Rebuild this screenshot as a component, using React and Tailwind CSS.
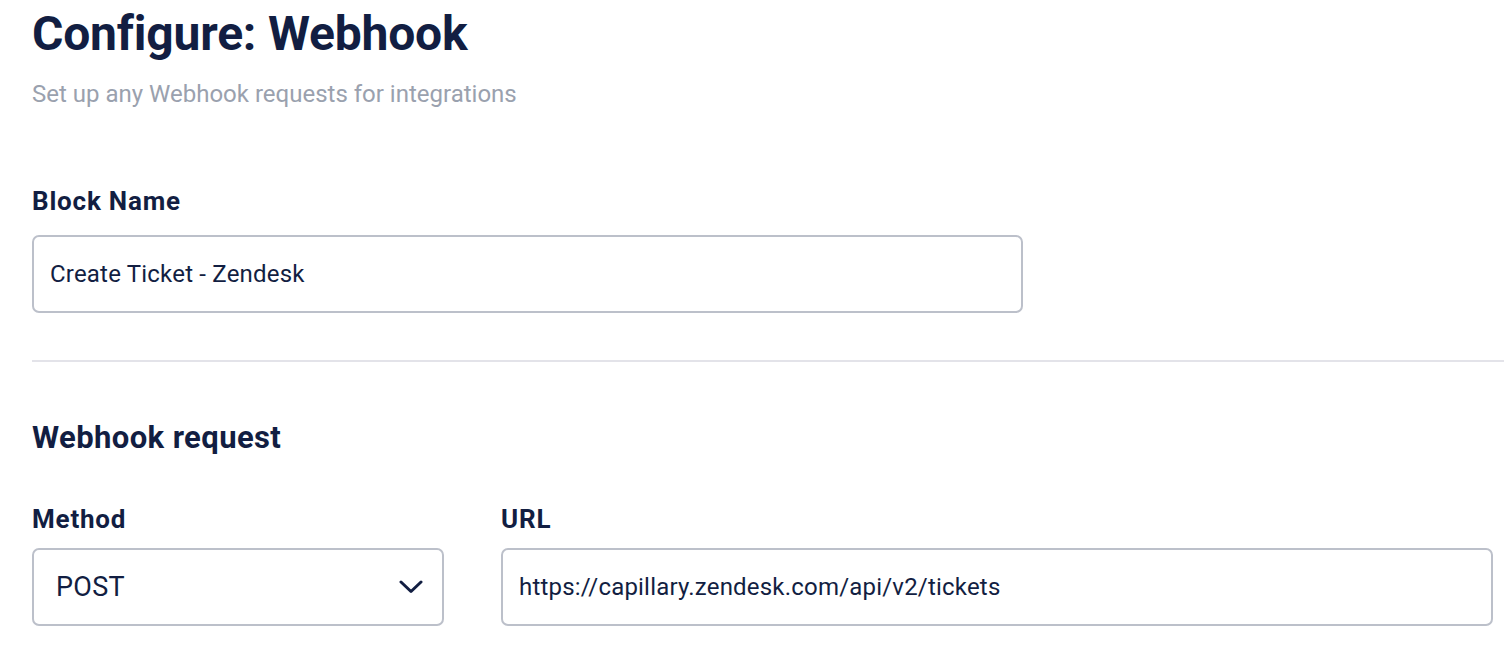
const Field = ({ label, children, className = '' }) => (
  <div className={className}>
    <div className="text-[26px] leading-[28px] font-bold tracking-[0.8px] mt-[50px]">{label}</div>
    {children}
  </div>
)

const Chevron = () => (
  <svg width="24" height="14" viewBox="0 0 24 14" fill="none">
    <polyline
      points="2,2 12,11.5 22,2"
      stroke="#121e42"
      strokeWidth="3"
      strokeLinecap="round"
      strokeLinejoin="round"
    />
  </svg>
)

export default function App() {
  return (
    <div className="min-h-screen bg-white pl-8 pt-[6px] font-['Roboto','Liberation_Sans',sans-serif] text-[#121e42] overflow-hidden">
      {/* Header */}
      <h1 className="text-[48px] leading-[56px] font-bold tracking-[-0.2px]">Configure: Webhook</h1>
      <p className="mt-[19px] text-[24px] leading-[26px] text-[#9aa1ae]">
        Set up any Webhook requests for integrations
      </p>

      {/* Block name */}
      <div className="mt-[80px] text-[26px] leading-[28px] font-bold tracking-[0.8px]">Block Name</div>
      <div className="mt-[20px] w-[991px] h-[78px] rounded-[7px] border-2 border-[#bcc0ca] flex items-center pl-[16px] text-[24px] tracking-[0.2px]">
        Create Ticket - Zendesk
      </div>

      <div className="mt-[47px] h-[2px] bg-[#e3e3e9]" />

      {/* Webhook request */}
      <h2 className="mt-[58px] text-[31px] leading-[35px] font-bold tracking-[0.4px]">Webhook request</h2>

      <div className="flex gap-[57px]">
        <Field label="Method" className="w-[412px]">
          <div className="mt-[15px] h-[78px] rounded-[7px] border-2 border-[#bcc0ca] flex items-center justify-between pl-[22px] pr-[19px] text-[27px] tracking-[0.3px]">
            <span>POST</span>
            <Chevron />
          </div>
        </Field>
        <Field label="URL" className="w-[992px]">
          <div className="mt-[15px] h-[78px] rounded-[7px] border-2 border-[#bcc0ca] flex items-center pl-[16px] text-[24px] tracking-[0.2px]">
            https://capillary.zendesk.com/api/v2/tickets
          </div>
        </Field>
      </div>
    </div>
  )
}
